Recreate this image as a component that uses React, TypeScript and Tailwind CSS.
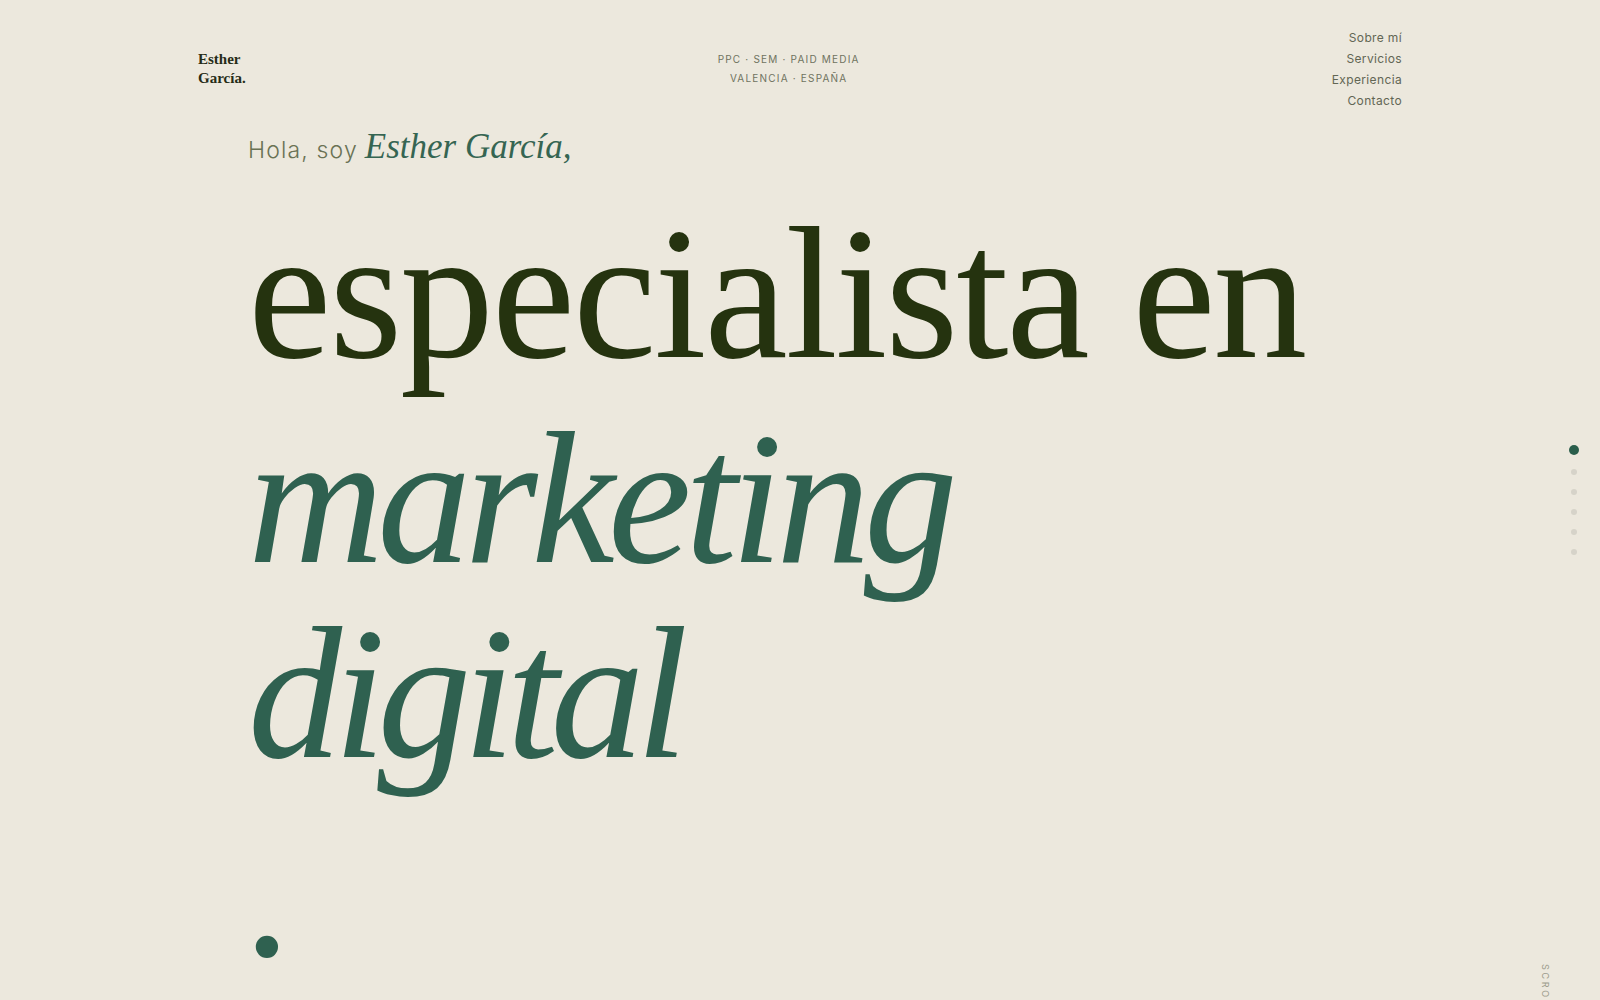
import React from 'react';

const serif = { fontFamily: '"Liberation Serif", "Times New Roman", serif' };
const sans = { fontFamily: 'Inter, "Noto Sans", sans-serif' };

const navItems = ['Sobre mí', 'Servicios', 'Experiencia', 'Contacto'];

const Header: React.FC = () => (
  <header className="mx-auto flex w-[1204px] items-center justify-between pt-[27px]">
    <div className="text-[15px] font-bold leading-[19px] text-[#262c17]" style={serif}>
      Esther
      <br />
      García.
    </div>
    <div className="text-center text-[10px] uppercase leading-[19px] tracking-[0.12em] text-[#6f7360]" style={sans}>
      <p>PPC · SEM · Paid Media</p>
      <p>Valencia · España</p>
    </div>
    <nav className="flex flex-col items-end text-[12px] leading-[21px] tracking-[0.03em] text-[#626654]" style={sans}>
      {navItems.map((item) => (
        <a key={item} href="#">
          {item}
        </a>
      ))}
    </nav>
  </header>
);

const Hero: React.FC = () => (
  <section className="mx-auto w-[1204px] pl-[50px]">
    <p className="mt-[16px] flex items-baseline gap-[7px] leading-[40px]">
      <span className="text-[23px] font-light tracking-[0.05em] text-[#6a7254]" style={sans}>
        Hola, soy
      </span>
      <span className="text-[35px] italic text-[#356552]" style={serif}>
        Esther García,
      </span>
    </p>
    <h1 className="mt-[26px] text-[188px] font-normal leading-[195px]" style={serif}>
      <span className="mb-[10px] block tracking-[-0.012em] text-[#25330f]">especialista en</span>
      <span className="block italic tracking-[-0.035em] text-[#2f6150]">marketing</span>
      <span className="block italic tracking-[-0.045em] text-[#2f6150]">digital</span>
      <span className="mt-[3px] block italic text-[#2f6150]">.</span>
    </h1>
  </section>
);

const SideDots: React.FC = () => (
  <div className="absolute right-[21px] top-[445px] flex flex-col items-center gap-[14px]">
    <span className="h-[10px] w-[10px] rounded-full bg-[#2a5e4b]" />
    {[0, 1, 2, 3, 4].map((i) => (
      <span key={i} className="h-[6px] w-[6px] rounded-full bg-[#d6d3c9]" />
    ))}
  </div>
);

export default function App() {
  return (
    <div className="relative h-[1000px] w-full overflow-hidden bg-[#ece8dd]">
      <Header />
      <Hero />
      <SideDots />
      <span
        className="absolute left-[1538px] top-[964px] text-[9px] uppercase tracking-[0.3em] text-[#9b9b8b]"
        style={{ ...sans, writingMode: 'vertical-rl' }}
      >
        Scroll
      </span>
    </div>
  );
}
